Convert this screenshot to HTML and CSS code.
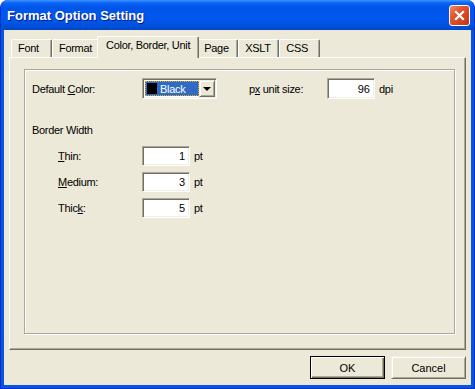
FILE: index.html
```html
<!DOCTYPE html>
<html lang="en">
  <head>
    <meta charset="UTF-8">
    <link rel="stylesheet" href="styles.css">
    <title>Format Option Setting</title>
  </head>
  <body>
    <div class="window">
      <div class="titlebar">
        <span class="title">Format Option Setting</span>
        <button class="close" aria-label="Close">
          <svg width="13" height="13" viewBox="0 0 13 13">
            <path d="M3 3 L10 10 M10 3 L3 10" stroke="#fff" stroke-width="2.2" stroke-linecap="square" fill="none" />
          </svg>
        </button>
      </div>
      <div class="client">
        <div class="tabs">
          <div class="tab">Font</div>
          <div class="tab">Format</div>
          <div class="tab active">Color, Border, Unit</div>
          <div class="tab">Page</div>
          <div class="tab">XSLT</div>
          <div class="tab">CSS</div>
        </div>
        <div class="panel">
          <div class="group">
            <div class="row top-row">
              <label class="label">Default <u>C</u>olor:</label>
              <div class="combo">
                <div class="combo-value">
                  <span class="swatch"></span>
                  <span>Black</span>
                </div>
                <span class="combo-btn"><span class="arrow"></span></span>
              </div>
              <label class="label unit-label">p<u>x</u> unit size:</label>
              <input class="field" value="96" />
              <span class="suffix">dpi</span>
            </div>
            <div class="heading">Border Width</div>
            <div class="rows">
              <div class="row sub">
                <label class="label"><u>T</u>hin:</label>
                <input class="field" value="1" />
                <span class="suffix">pt</span>
              </div>
              <div class="row sub">
                <label class="label"><u>M</u>edium:</label>
                <input class="field" value="3" />
                <span class="suffix">pt</span>
              </div>
              <div class="row sub">
                <label class="label">Thic<u>k</u>:</label>
                <input class="field" value="5" />
                <span class="suffix">pt</span>
              </div>
            </div>
          </div>
        </div>
        <div class="actions">
          <button class="btn default">OK</button>
          <button class="btn">Cancel</button>
        </div>
      </div>
    </div>
  </body>
</html>
```

FILE: styles.css
```css
:root {
--face: #ece9d8;
--light: #f1efe2;
--shadow: #aca899;
--dark: #716f64;
--font: "Liberation Sans", Arial, sans-serif;
}
* {
margin: 0;
padding: 0;
box-sizing: border-box;
}
body {
background: #fff;
font-family: var(--font);
font-size: 11px;
letter-spacing: -0.3px;
color: #000;
}
.window {
width: 475px;
height: 389px;
display: flex;
flex-direction: column;
border-radius: 8px 8px 0 0;
overflow: hidden;
background: #0a54e4;
border: 1px solid #0031c8;
border-top: none;
}
.titlebar {
height: 30px;
flex: none;
display: flex;
align-items: center;
justify-content: space-between;
padding: 0 4px 0 6px;
background: linear-gradient(#3d95ff 0, #0a62f6 3px, #0054e8 8px, #0058ee 16px, #0054e3 24px, #0046c8 30px);
}
.title {
color: #fff;
font-weight: bold;
font-size: 13px;
letter-spacing: 0;
text-shadow: 1px 1px #0a1883;
}
.close {
width: 21px;
height: 21px;
border: 1px solid #fff;
border-radius: 3px;
background: linear-gradient(135deg, #f08a62 0%, #e2572f 35%, #d2421c 75%, #b8321a 100%);
display: flex;
align-items: center;
justify-content: center;
}
.client {
flex: 1;
margin: 0 3px 3px;
background: var(--face);
display: flex;
flex-direction: column;
padding: 6px 5px 6px;
}
.tabs {
height: 21px;
flex: none;
display: flex;
align-items: flex-end;
padding-left: 2px;
}
.tab {
height: 18px;
min-width: 41px;
padding: 1px 6px 0;
line-height: 14px;
background: var(--face);
border-top: 1px solid #fff;
border-left: 1px solid #fff;
border-right: 1px solid var(--dark);
box-shadow: inset -1px 0 var(--shadow);
border-radius: 2px 2px 0 0;
white-space: nowrap;
}
.tab.active {
height: 22px;
margin: 0 -2px -1px;
padding: 1px 8px 0;
position: relative;
z-index: 1;
}
.tab.active + .tab {
border-left-color: transparent;
}
.panel {
flex: 1;
display: flex;
padding: 11px 10px 15px 14px;
border-top: 1px solid #fff;
border-left: 1px solid #fff;
border-right: 1px solid var(--dark);
border-bottom: 1px solid var(--dark);
box-shadow: inset -1px -1px var(--shadow);
}
.group {
flex: 1;
padding: 8px 7px;
border: 1px solid var(--shadow);
box-shadow: inset 1px 1px #fff, 1px 1px #fff;
}
.row {
display: flex;
align-items: center;
height: 20px;
}
.top-row {
height: 21px;
}
.label {
width: 110px;
flex: none;
}
.sub .label {
padding-left: 26px;
}
.unit-label {
width: 78px;
margin-left: 32px;
}
.combo {
width: 75px;
height: 21px;
display: flex;
padding: 1px;
background: #fff;
border: 1px solid;
border-color: var(--shadow) #fff #fff var(--shadow);
box-shadow: inset 1px 1px var(--dark), inset -1px -1px var(--light);
}
.combo-value {
flex: 1;
display: flex;
align-items: center;
gap: 3px;
margin: 1px 0 1px 1px;
padding-left: 2px;
background: #316ac5;
color: #fff;
outline: 1px dotted #e8b000;
outline-offset: -1px;
}
.swatch {
width: 10px;
height: 11px;
background: #000;
}
.combo-btn {
width: 16px;
flex: none;
display: flex;
align-items: center;
justify-content: center;
background: var(--face);
border: 1px solid;
border-color: var(--light) var(--dark) var(--dark) var(--light);
box-shadow: inset 1px 1px #fff, inset -1px -1px var(--shadow);
}
.arrow {
border-left: 4px solid transparent;
border-right: 4px solid transparent;
border-top: 4px solid #000;
margin-top: 1px;
}
.field {
width: 48px;
height: 20px;
padding: 0 4px;
text-align: right;
font-family: var(--font);
font-size: 11px;
background: #fff;
border: 1px solid;
border-color: var(--shadow) #fff #fff var(--shadow);
box-shadow: inset 1px 1px var(--dark), inset -1px -1px var(--light);
outline: none;
}
.top-row .field {
height: 21px;
}
.suffix {
margin-left: 4px;
}
.heading {
margin-top: 25px;
line-height: 13px;
}
.rows {
display: flex;
flex-direction: column;
gap: 6px;
margin-top: 9px;
}
.actions {
flex: none;
display: flex;
justify-content: flex-end;
gap: 6px;
margin-top: 6px;
}
.btn {
width: 75px;
height: 23px;
font-family: var(--font);
font-size: 11px;
background: var(--face);
border: 1px solid;
border-color: var(--light) var(--dark) var(--dark) var(--light);
box-shadow: inset 1px 1px #fff, inset -1px -1px var(--shadow);
}
.btn.default {
border-color: #000;
box-shadow: inset 1px 1px #fff, inset -1px -1px var(--dark), inset -2px -2px var(--shadow);
}
```
